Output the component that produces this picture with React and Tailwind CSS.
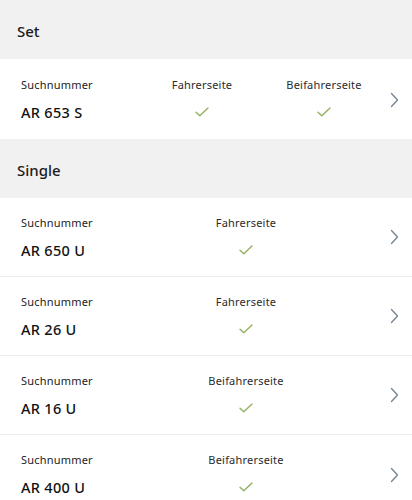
const font = { fontFamily: '"Noto Sans", "Open Sans", sans-serif' }

function Check() {
  return (
    <svg width="14" height="10" viewBox="0 0 14 10" fill="none" className="block">
      <path d="M1 5.2 L4.8 8.8 L13 1" stroke="#94b060" strokeWidth="1.4" strokeLinecap="round" strokeLinejoin="round" />
    </svg>
  )
}

function Chevron() {
  return (
    <svg width="9" height="16" viewBox="0 0 9 16" fill="none" className="block">
      <path d="M1.5 1.5 L7.5 8 L1.5 14.5" stroke="#6f8397" strokeWidth="1.3" strokeLinecap="round" strokeLinejoin="round" />
    </svg>
  )
}

function Header({ title }) {
  return (
    <div className="bg-[#f1f1f1] h-[59px] flex items-center pt-[3px] px-[17px] text-[15px] font-medium text-[#1c1c1c]">
      {title}
    </div>
  )
}

function Col({ label, className }) {
  return (
    <div className={`flex flex-col items-center ${className}`}>
      <div className="text-[11px] text-[#2b2b2b] leading-none h-[11px] mt-[19px] tracking-[0.2px]">{label}</div>
      <div className="mt-[17px]"><Check /></div>
    </div>
  )
}

function Row({ number, sides, set, last }) {
  return (
    <div className={`flex h-[79px] pl-[21px] ${last ? '' : 'border-b border-[#ececec]'}`}>
      <div className="w-[120px] flex flex-col">
        <div className="text-[11px] text-[#1c1c1c] leading-none mt-[19px] tracking-[0.2px]">Suchnummer</div>
        <div className="text-[14.5px] text-[#111] leading-none mt-[15px] font-medium tracking-[0.3px]">{number}</div>
      </div>
      {set ? (
        <>
          <Col label="Fahrerseite" className="w-[120px] pl-[2px]" />
          <Col label="Beifahrerseite" className="w-[122px] pl-[4px]" />
        </>
      ) : (
        <Col label={sides} className="w-[210px]" />
      )}
      <div className="flex-1 flex items-center justify-end pr-[13px]">
        <Chevron />
      </div>
    </div>
  )
}

export default function App() {
  return (
    <div className="w-[412px] h-[500px] overflow-hidden bg-white" style={font}>
      <Header title="Set" />
      <div className="h-px bg-white" />
      <Row number="AR 653 S" set last />
      <Header title="Single" />
      <Row number="AR 650 U" sides="Fahrerseite" />
      <Row number="AR 26 U" sides="Fahrerseite" />
      <Row number="AR 16 U" sides="Beifahrerseite" />
      <Row number="AR 400 U" sides="Beifahrerseite" last />
    </div>
  )
}
